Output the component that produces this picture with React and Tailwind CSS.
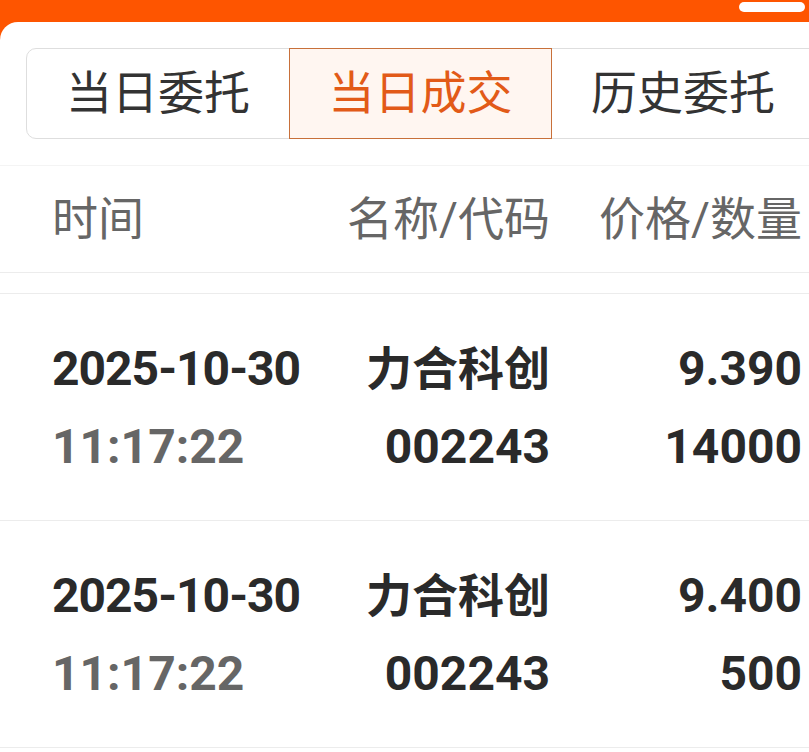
import React from 'react';

const tabs = ['当日委托', '当日成交', '历史委托'];

const trades = [
    { date: '2025-10-30', time: '11:17:22', name: '力合科创', code: '002243', price: '9.390', qty: '14000' },
    { date: '2025-10-30', time: '11:17:22', name: '力合科创', code: '002243', price: '9.400', qty: '500' },
];

const font = { fontFamily: "Roboto, 'Noto Sans CJK SC', sans-serif" };

export default function App() {
    const active = 1;

    return (
        <div className="w-[809px] h-[752px] overflow-hidden bg-[#fe5500] relative" style={font}>
            {/* status pill */}
            <div className="absolute right-[4px] top-[2px] w-[66px] h-[10px] rounded-full bg-white" />

            <div className="mt-[22px] h-[730px] bg-white rounded-tl-[18px] w-[840px]">
                {/* Tabs */}
                <div className="pt-[26px] pl-[26px]">
                    <div className="flex h-[91px] w-[790px] border border-[#dedede] rounded-l-[10px]">
                        {tabs.map((t, i) => (
                            <div
                                key={t}
                                className={
                                    i === active
                                        ? 'w-[263px] h-[91px] -my-px flex items-center justify-center border border-[#c8703a] bg-[#fff6f1] text-[#e25a18] text-[46px]'
                                        : 'w-[262px] flex items-center justify-center text-[#333333] text-[46px]'
                                }
                            >
                                {t}
                            </div>
                        ))}
                    </div>
                </div>

                {/* Header */}
                <div className="mt-[26px] h-[108px] border-t border-b border-t-[#f4f4f4] border-b-[#ececec] flex items-center pl-[52px] text-[46px] text-[#666666]">
                    <div className="w-[248px]">时间</div>
                    <div className="w-[250px] text-right">名称/代码</div>
                    <div className="w-[252px] text-right">价格/数量</div>
                </div>

                {/* List */}
                <div className="mt-[20px] border-t border-[#ececec]">
                    {trades.map((r, i) => (
                        <div key={i} className="flex pl-[52px] pt-[36px] pb-[34px] border-b border-[#ececec] text-[48px] font-bold leading-[78px] whitespace-nowrap">
                            <div className="w-[248px]">
                                <div className="text-[#2a2a2a] tracking-[-1px]">{r.date}</div>
                                <div className="text-[#666666]">{r.time}</div>
                            </div>
                            <div className="w-[250px] text-right text-[#2a2a2a]">
                                <div className="text-[46px]">{r.name}</div>
                                <div>{r.code}</div>
                            </div>
                            <div className="w-[252px] text-right text-[#2a2a2a]">
                                <div>{r.price}</div>
                                <div>{r.qty}</div>
                            </div>
                        </div>
                    ))}
                </div>
            </div>
        </div>
    );
}
